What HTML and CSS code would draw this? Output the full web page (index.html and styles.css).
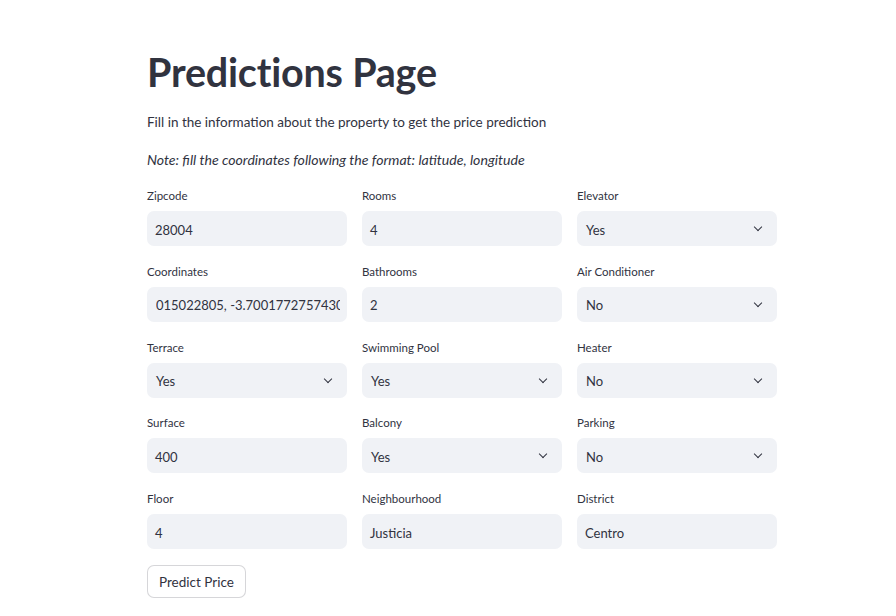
FILE: index.html
```html
<!DOCTYPE html>
<html>
<head>
<meta charset="utf-8">
<link rel="stylesheet" href="styles.css">
</head>
<body>
<main class="page">
  <h1 class="title">Predictions Page</h1>
  <p class="lead">Fill in the information about the property to get the price prediction</p>
  <p class="note">Note: fill the coordinates following the format: latitude, longitude</p>
  <div class="grid">
    <div class="field"><div class="label">Zipcode</div><div class="box">28004</div></div>
    <div class="field"><div class="label">Rooms</div><div class="box">4</div></div>
    <div class="field"><div class="label">Elevator</div><div class="box select">Yes<span class="chev"></span></div></div>

    <div class="field"><div class="label">Coordinates</div><div class="box coords"><span class="coord-text">015022805, -3.70017727574304</span></div></div>
    <div class="field"><div class="label">Bathrooms</div><div class="box">2</div></div>
    <div class="field"><div class="label">Air Conditioner</div><div class="box select">No<span class="chev"></span></div></div>

    <div class="field"><div class="label">Terrace</div><div class="box select">Yes<span class="chev"></span></div></div>
    <div class="field"><div class="label">Swimming Pool</div><div class="box select">Yes<span class="chev"></span></div></div>
    <div class="field"><div class="label">Heater</div><div class="box select">No<span class="chev"></span></div></div>

    <div class="field"><div class="label">Surface</div><div class="box">400</div></div>
    <div class="field"><div class="label">Balcony</div><div class="box select">Yes<span class="chev"></span></div></div>
    <div class="field"><div class="label">Parking</div><div class="box select">No<span class="chev"></span></div></div>

    <div class="field"><div class="label">Floor</div><div class="box">4</div></div>
    <div class="field"><div class="label">Neighbourhood</div><div class="box">Justicia</div></div>
    <div class="field"><div class="label">District</div><div class="box">Centro</div></div>
  </div>
  <button class="btn">Predict Price</button>
</main>
</body>
</html>
```

FILE: styles.css
```css
html, body {
  margin: 0;
  padding: 0;
  background: #ffffff;
}
body {
  font-family: Lato, "Noto Sans", "Liberation Sans", sans-serif;
  color: #31333f;
  width: 896px;
  height: 616px;
  overflow: hidden;
}
.page {
  width: 630px;
  margin-left: 147px;
  padding-top: 49px;
}
.title {
  margin: 0;
  font-size: 39.5px;
  line-height: 46px;
  font-weight: 700;
  letter-spacing: -0.2px;
}
.lead {
  margin: 17px 0 0;
  font-size: 13.5px;
  line-height: 20px;
}
.note {
  margin: 18px 0 0;
  font-size: 14.1px;
  line-height: 20px;
  font-style: italic;
}
.grid {
  margin-top: 16px;
  display: grid;
  grid-template-columns: repeat(3, 200px);
  column-gap: 15px;
  row-gap: 15.75px;
}
.field {
  display: flex;
  flex-direction: column;
  gap: 5px;
}
.label {
  font-size: 11.5px;
  line-height: 20px;
  height: 20px;
}
.box {
  position: relative;
  height: 35px;
  background: #f0f2f6;
  border-radius: 7px;
  display: flex;
  align-items: center;
  padding: 2px 8px 0;
  box-sizing: border-box;
  font-size: 13px;
  overflow: hidden;
  white-space: nowrap;
}
.coords {
  padding-left: 0;
  padding-right: 0;
}
.coord-text {
  display: block;
  flex: 0 0 184px;
  margin-left: 9px;
  overflow: hidden;
  white-space: nowrap;
}
.select {
  padding-left: 9px;
}
.chev {
  position: absolute;
  right: 16px;
  top: 13px;
  width: 5px;
  height: 5px;
  border-right: 1.8px solid #31333f;
  border-bottom: 1.8px solid #31333f;
  transform: rotate(45deg);
}
.btn {
  display: block;
  margin-top: 16px;
  height: 33px;
  padding: 0 11px;
  background: #ffffff;
  border: 1px solid rgba(49, 51, 63, 0.2);
  border-radius: 7px;
  font-family: inherit;
  font-size: 13.5px;
  color: #31333f;
}
```
